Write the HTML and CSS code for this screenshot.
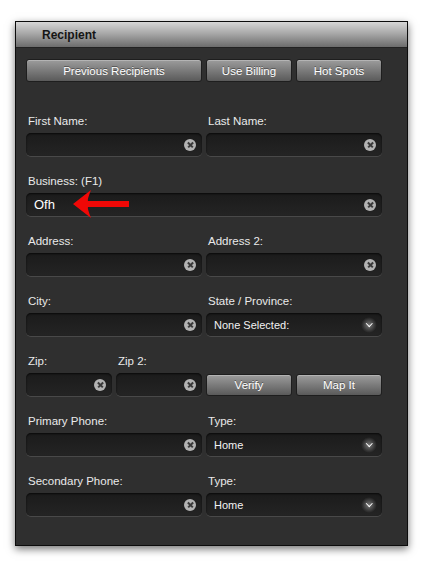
FILE: index.html
```html
<html>
  <head>
    <link rel="stylesheet" href="styles.css">
    <title>Recipient</title>
  </head>
  <body>
    <div class="window">
      <div class="title">Recipient</div>
      <div class="content">
        <div class="grid buttons">
          <button class="btn span2">Previous Recipients</button>
          <button class="btn">Use Billing</button>
          <button class="btn">Hot Spots</button>
        </div>

        <div class="grid fields">
          <div class="group span2">
            <label>First Name:</label>
            <div class="field"><span class="value"></span><span class="clear"></span></div>
          </div>
          <div class="group span2">
            <label>Last Name:</label>
            <div class="field"><span class="value"></span><span class="clear"></span></div>
          </div>

          <div class="group span4">
            <label>Business: (F1)</label>
            <div class="field">
              <span class="value">Ofh</span><span class="clear"></span>
              <svg class="arrow" width="58" height="30" viewBox="0 0 58 30">
                <path d="M0 15 L18 1 Q14 11 15 12 L56 12 L56 18 L15 18 Q14 19 18 29 Z" fill="#f00806"/>
              </svg>
            </div>
          </div>

          <div class="group span2">
            <label>Address:</label>
            <div class="field"><span class="value"></span><span class="clear"></span></div>
          </div>
          <div class="group span2">
            <label>Address 2:</label>
            <div class="field"><span class="value"></span><span class="clear"></span></div>
          </div>

          <div class="group span2">
            <label>City:</label>
            <div class="field"><span class="value"></span><span class="clear"></span></div>
          </div>
          <div class="group span2">
            <label>State / Province:</label>
            <div class="field select"><span class="value">None Selected:</span><span class="chevron"></span></div>
          </div>

          <div class="group">
            <label>Zip:</label>
            <div class="field"><span class="value"></span><span class="clear"></span></div>
          </div>
          <div class="group">
            <label>Zip 2:</label>
            <div class="field"><span class="value"></span><span class="clear"></span></div>
          </div>
          <button class="btn low">Verify</button>
          <button class="btn low">Map It</button>

          <div class="group span2">
            <label>Primary Phone:</label>
            <div class="field"><span class="value"></span><span class="clear"></span></div>
          </div>
          <div class="group span2">
            <label>Type:</label>
            <div class="field select"><span class="value">Home</span><span class="chevron"></span></div>
          </div>

          <div class="group span2">
            <label>Secondary Phone:</label>
            <div class="field"><span class="value"></span><span class="clear"></span></div>
          </div>
          <div class="group span2">
            <label>Type:</label>
            <div class="field select"><span class="value">Home</span><span class="chevron"></span></div>
          </div>
        </div>
      </div>
    </div>
  </body>
</html>
```

FILE: styles.css
```css
body {
  margin: 0;
  background: #fff;
  font-family: "Liberation Sans", Arial, sans-serif;
}

.window {
  margin: 21px 0 0 15px;
  width: 391px;
  background: #2f2f2f;
  border: 1px solid #0c0c0c;
  box-shadow: 0 3px 8px rgba(0, 0, 0, 0.55);
}

.title {
  height: 23px;
  line-height: 23px;
  padding: 2px 0 0 26px;
  font-size: 12px;
  font-weight: bold;
  color: #151515;
  background: linear-gradient(#d6d6d6, #a9a9a9 45%, #6c6c6c);
  border-bottom: 1px solid #222;
}

.content {
  padding: 11px 0 29px 10px;
}

.grid {
  display: grid;
  grid-template-columns: repeat(4, 86px);
  column-gap: 4px;
}

.buttons {
  margin-bottom: 32px;
}

.fields {
  row-gap: 18px;
}

.span2 {
  grid-column: span 2;
}

.span4 {
  grid-column: span 4;
}

.btn {
  height: 23px;
  padding: 0;
  border: 1px solid #1e1e1e;
  border-radius: 3px;
  background: linear-gradient(#9c9c9c, #7b7b7b 50%, #5a5a5a);
  box-shadow: inset 0 1px 0 rgba(255, 255, 255, 0.25);
  color: #fff;
  font-family: "Liberation Sans", Arial, sans-serif;
  font-size: 11.5px;
  text-shadow: 0 -1px 0 rgba(0, 0, 0, 0.4);
}

.btn.low {
  align-self: end;
  height: 22px;
}

.group {
  display: flex;
  flex-direction: column;
}

.group label {
  height: 14px;
  line-height: 14px;
  margin: 0 0 5px 2px;
  font-size: 11.5px;
  color: #eaeaea;
}

.field {
  position: relative;
  height: 23px;
  display: flex;
  align-items: center;
  justify-content: space-between;
  padding: 0 6px 0 8px;
  border-radius: 5px;
  background: linear-gradient(#1b1b1b, #242424);
  box-shadow: inset 0 1px 2px rgba(0, 0, 0, 0.7), 0 1px 0 rgba(255, 255, 255, 0.13);
}

.value {
  color: #fff;
  font-size: 13px;
}

.select .value {
  font-size: 11px;
  color: #f2f2f2;
}

.clear {
  width: 12px;
  height: 12px;
  border-radius: 50%;
  background: #b3b3b3;
  position: relative;
}

.clear::before,
.clear::after {
  content: "";
  position: absolute;
  left: 2.5px;
  top: 5.25px;
  width: 7px;
  height: 1.5px;
  background: #3a3a3a;
  transform: rotate(45deg);
}

.clear::after {
  transform: rotate(-45deg);
}

.chevron {
  width: 16px;
  height: 16px;
  margin-right: -1px;
  border-radius: 50%;
  background: radial-gradient(circle, rgba(255, 255, 255, 0.4), rgba(255, 255, 255, 0.08) 55%, rgba(255, 255, 255, 0) 70%);
  position: relative;
}

.chevron::after {
  content: "";
  position: absolute;
  left: 5.5px;
  top: 4.5px;
  width: 3.5px;
  height: 3.5px;
  border-right: 1.5px solid #fff;
  border-bottom: 1.5px solid #fff;
  transform: rotate(45deg);
}

.arrow {
  position: absolute;
  left: 47px;
  top: -4px;
}
```
